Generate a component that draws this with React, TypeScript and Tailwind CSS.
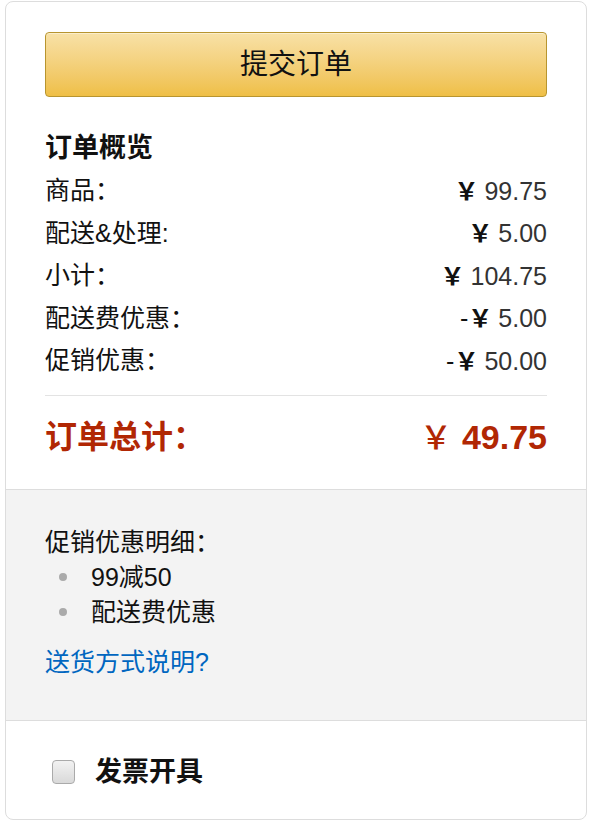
import React from 'react';

const cjk = { fontFamily: '"Liberation Sans", "Noto Sans CJK SC", sans-serif' };

interface Line {
  label: string;
  sign?: string;
  amount: string;
}

const lines: Line[] = [
  { label: '商品：', amount: '99.75' },
  { label: '配送&处理:', amount: '5.00' },
  { label: '小计：', amount: '104.75' },
  { label: '配送费优惠：', sign: '-', amount: '5.00' },
  { label: '促销优惠：', sign: '-', amount: '50.00' },
];

const Price: React.FC<{ sign?: string; amount: string }> = ({ sign, amount }) => (
  <span className="flex items-baseline text-[#111]">
    {sign && <span className="text-[25px]">{sign}</span>}
    <span className="text-[24px] font-bold" style={{ fontFamily: '"Noto Sans CJK SC", sans-serif' }}>￥</span>
    <span className="ml-[6px] text-[25px] text-[#333]">{amount}</span>
  </span>
);

const App: React.FC = () => {
  return (
    <div className="min-h-[840px] bg-white pt-px pl-[5px]" style={cjk}>
      <div className="w-[582px] h-[819px] rounded-lg border border-[#dddddd] overflow-hidden flex flex-col">
        <div className="px-[39px] pt-[30px] pb-[28px]">
          <button className="w-full h-[65px] rounded-[4px] border border-[#b8952f] bg-gradient-to-b from-[#f8e1a6] to-[#efbf45] text-[28px] text-[#111] shadow-[inset_0_1px_0_#fbeecb]">
            提交订单
          </button>

          <h3 className="mt-[30px] text-[27px] font-bold leading-[42px] text-[#111]">订单概览</h3>
          <div className="text-[25px] leading-[42.5px] text-[#111]">
            {lines.map((l) => (
              <div key={l.label} className="flex justify-between items-center h-[42.5px]">
                <span>{l.label}</span>
                <Price sign={l.sign} amount={l.amount} />
              </div>
            ))}
          </div>

          <div className="mt-[13px] border-t border-[#e3e3e3]" />

          <div className="mt-[17px] flex justify-between items-center h-[48px] text-[#b12704] font-bold">
            <span className="text-[32px]">订单总计：</span>
            <span className="flex items-baseline">
              <span className="text-[32px] font-medium" style={{ fontFamily: '"Noto Sans CJK SC", sans-serif' }}>￥</span>
              <span className="ml-[10px] text-[34px]">49.75</span>
            </span>
          </div>
        </div>

        <div className="border-t border-[#dddddd] bg-[#f3f3f3] h-[231px] px-[39px] pt-[35px] text-[25px] text-[#111]">
          <div className="leading-[35px]">促销优惠明细：</div>
          <ul className="leading-[35px]">
            <li className="flex items-center">
              <span className="ml-[14px] w-[8px] h-[8px] rounded-full bg-[#aaaaaa]" />
              <span className="ml-[24px]">99减50</span>
            </li>
            <li className="flex items-center">
              <span className="ml-[14px] w-[8px] h-[8px] rounded-full bg-[#aaaaaa]" />
              <span className="ml-[24px]">配送费优惠</span>
            </li>
          </ul>
          <a href="#" className="block mt-[15px] leading-[35px] text-[#0066c0]">送货方式说明?</a>
        </div>

        <div className="flex-1 border-t border-[#dddddd] flex items-center px-[46px] pt-[4px]">
          <span className="w-[23px] h-[24px] rounded-[4px] border border-[#aaaaaa] bg-gradient-to-b from-[#f2f2f2] to-[#d9d9d9]" />
          <span className="ml-[20px] text-[27px] font-bold text-[#111]">发票开具</span>
        </div>
      </div>
    </div>
  );
};

export default App;
